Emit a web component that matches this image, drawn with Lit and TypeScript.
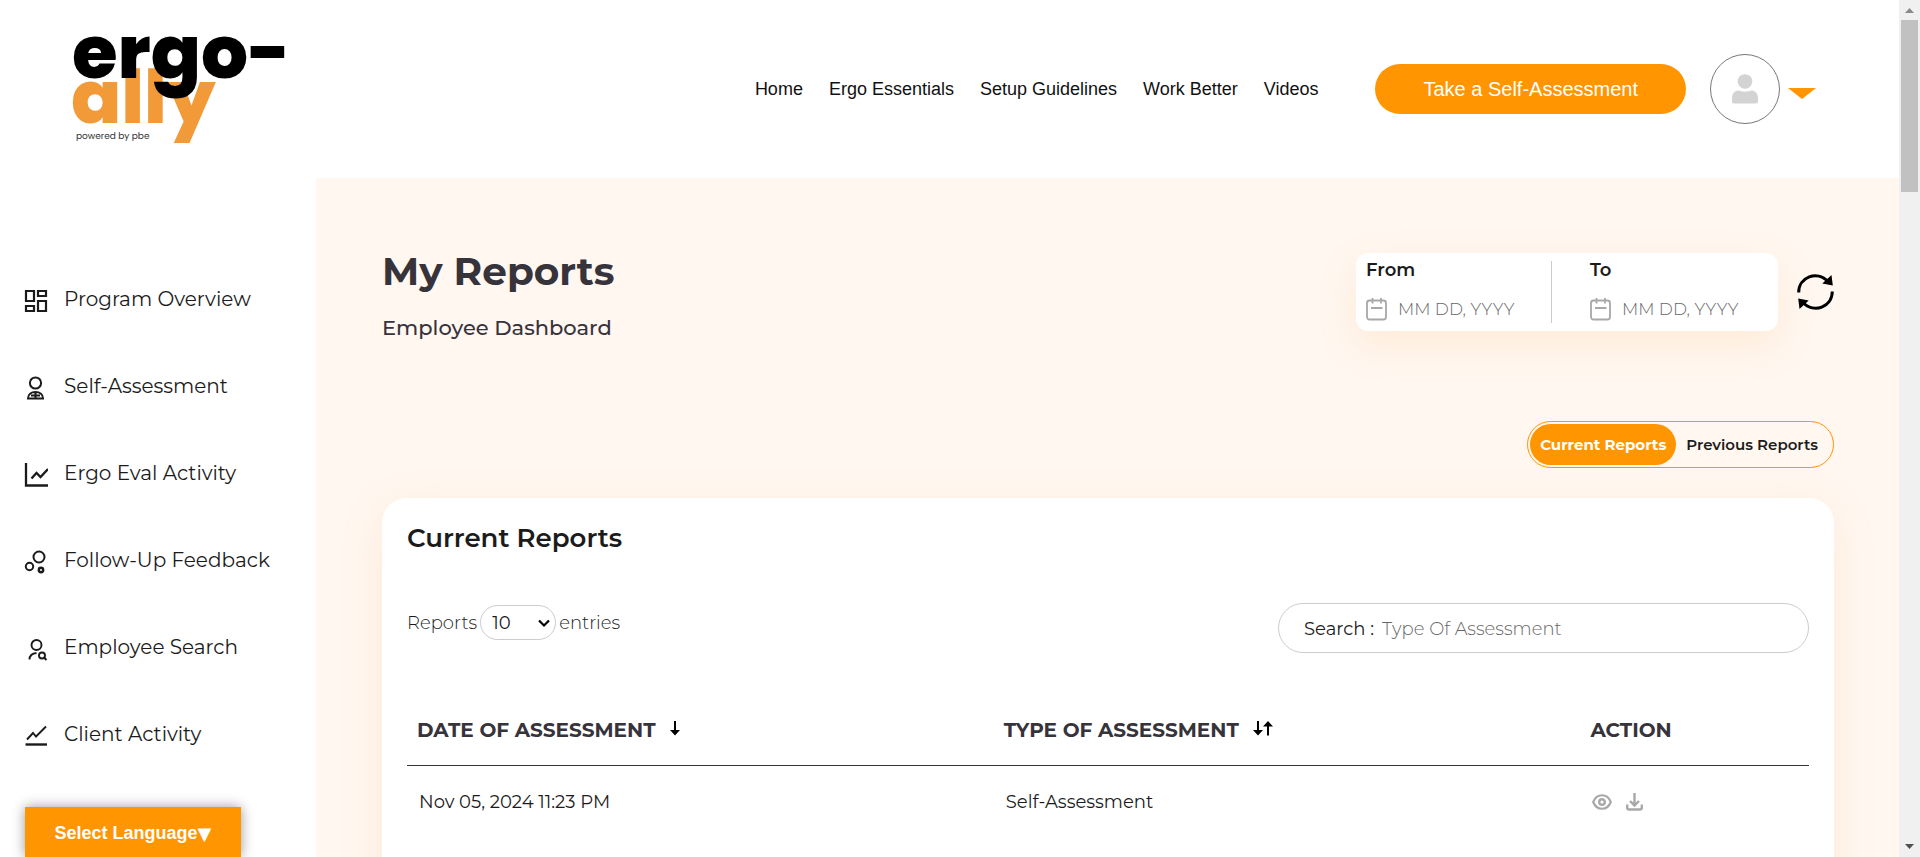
import { LitElement, html, css, svg } from "lit";
import { customElement, property, state } from "lit/decorators.js";
import { classMap } from "lit/directives/class-map.js";

const icons: Record<string, unknown> = {
  overview: svg`<path d="M2 2h8v10h-8zM14 2h8v5h-8zM2 17h8v5h-8zM14 12h8v10h-8z" fill="none" stroke="currentColor" stroke-width="2.2"/>`,
  assess: svg`<g fill="none" stroke="currentColor" stroke-width="2"><circle cx="11.500" cy="7" r="5.600"/><path d="M4 22.500c0-4 3-6.500 7.500-6.500s7.500 2.500 7.500 6.500zM11.500 16v6.500M7 19.500h9"/></g>`,
  chart: svg`<path d="M2 0v22.500h22M7.500 15.500l5-5.500 4 4 7.500-8" fill="none" stroke="currentColor" stroke-width="2.3"/>`,
  bubbles: svg`<g fill="none" stroke="currentColor"><circle cx="15" cy="7" r="5.500" stroke-width="2"/><circle cx="5.500" cy="16.500" r="3.700" stroke-width="2"/><circle cx="17" cy="20" r="2.200" stroke-width="2.400"/></g>`,
  search: svg`<g fill="none" stroke="currentColor" stroke-width="1.900"><circle cx="12.500" cy="8" r="5"/><path d="M5.500 22.500c0-3.500 2.500-6 7-6.500"/><circle cx="18" cy="18.500" r="3"/><path d="M20 20.500l2.500 2.500"/></g>`,
  trend: svg`<path d="M3 15.500l6-6.500 3 3.500 10-10" fill="none" stroke="currentColor" stroke-width="1.900"/><path d="M1.500 20.500h21.500" stroke="currentColor" stroke-width="2.400"/>`,
};

const base = css`
  * {
    box-sizing: border-box;
  }
  button,
  input,
  select {
    font: inherit;
    color: inherit;
    background: none;
    border: 0;
    padding: 0;
    margin: 0;
  }
  button {
    cursor: pointer;
  }
  a {
    color: inherit;
    text-decoration: none;
  }
  svg {
    display: block;
    flex: none;
  }
`;

@customElement("site-header")
class SiteHeader extends LitElement {
  static styles = [
    base,
    css`
      :host {
        display: flex;
        align-items: center;
        justify-content: space-between;
        height: 178px;
        padding: 0 83px 0 70px;
        background: #fff;
        font-family: "Liberation Sans", Arial, sans-serif;
      }
      .right {
        display: flex;
        align-items: center;
      }
      nav {
        display: flex;
        gap: 26px;
        font-size: 18px;
        line-height: 24px;
        margin-right: 57px;
        color: #111;
      }
      .cta {
        height: 50px;
        padding: 0 48px;
        border-radius: 25px;
        background: #ff9500;
        color: #fff;
        font-size: 20px;
      }
      .user {
        display: flex;
        align-items: center;
        gap: 8px;
        margin-left: 24px;
      }
      .avatar {
        display: grid;
        place-items: center;
        width: 70px;
        height: 70px;
        border: 1px solid #777;
        border-radius: 50%;
      }
      .caret {
        margin-top: 9px;
      }
      .logo {
        overflow: visible;
      }
      .big {
        font: 800 74px Poppins, Montserrat, Inter, sans-serif;
      }
      .small {
        font: 400 9px Poppins, Montserrat, Inter, sans-serif;
      }
    `,
  ];
  links = ["Home", "Ergo Essentials", "Setup Guidelines", "Work Better", "Videos"];
  render() {
    return html`
      <a href="#" aria-label="ergo-ally home">
        <svg class="logo" width="240" height="120" viewBox="0 0 240 120">
          <text class="big" x="1" y="94" fill="#f29a38">ally</text>
          <text class="big" x="2" y="49">ergo-</text>
          <text class="small" x="6" y="110" fill="#333">powered by pbe</text>
        </svg>
      </a>
      <div class="right">
        <nav>${this.links.map((l) => html`<a href="#">${l}</a>`)}</nav>
        <button class="cta">Take a Self-Assessment</button>
        <button class="user" aria-label="Account menu">
          <span class="avatar">
            <svg width="26" height="30" viewBox="0 0 26 30" fill="#d3d3d3">
              <circle cx="13" cy="7.500" r="7.300" />
              <path d="M0 24c0-5 3-7.500 7-7.500 2.500 1.500 9.500 1.500 12 0 4 0 7 2.500 7 7.500v3.500q0 2-2 2H2q-2 0-2-2z" />
            </svg>
          </span>
          <svg class="caret" width="28" height="11" viewBox="0 0 28 11"><path d="M0 0h28L14 11z" fill="#ff9500" /></svg>
        </button>
      </div>
    `;
  }
}

@customElement("side-menu")
class SideMenu extends LitElement {
  static styles = [
    base,
    css`
      :host {
        display: block;
        background: #fff;
        color: #1b1b1b;
      }
      nav {
        display: flex;
        flex-direction: column;
        gap: 59px;
        padding: 107px 0 0 24px;
      }
      .item {
        display: flex;
        align-items: center;
        gap: 16px;
        font-size: 20px;
        line-height: 28px;
      }
      .item svg {
        margin-top: 4px;
      }
    `,
  ];
  items = [
    ["overview", "Program Overview"],
    ["assess", "Self-Assessment"],
    ["chart", "Ergo Eval Activity"],
    ["bubbles", "Follow-Up Feedback"],
    ["search", "Employee Search"],
    ["trend", "Client Activity"],
  ];
  render() {
    return html`<nav>
      ${this.items.map(
        ([icon, label]) => html`<a class="item" href="#">
          <svg width="24" height="24" viewBox="0 0 24 24">${icons[icon]}</svg>${label}
        </a>`
      )}
    </nav>`;
  }
}

@customElement("date-range")
class DateRange extends LitElement {
  static styles = [
    base,
    css`
      :host {
        display: flex;
        align-items: center;
        gap: 19px;
      }
      .box {
        display: grid;
        grid-template-columns: 185px 1fr;
        height: 78px;
        width: 422px;
        padding: 8px 10px;
        border-radius: 12px;
        background: #fff;
        box-shadow: 0 14px 36px rgba(255, 190, 130, 0.22);
      }
      .field {
        display: flex;
        flex-direction: column;
        justify-content: space-between;
      }
      .field + .field {
        border-left: 1px solid #ccc;
        padding-left: 38px;
      }
      label {
        font-size: 18px;
        line-height: 18px;
        font-weight: 600;
        color: #1b1b1b;
      }
      .line {
        display: flex;
        align-items: center;
        gap: 11px;
        height: 28px;
      }
      input {
        width: 130px;
        font-size: 17px;
        font-weight: 300;
        outline: 0;
      }
      input::placeholder {
        color: #666;
        opacity: 1;
      }
    `,
  ];
  field(id: string, label: string) {
    return html`<div class="field">
      <label for=${id}>${label}</label>
      <div class="line">
        <svg width="21" height="24" viewBox="0 0 21 24" fill="none" stroke="#a8a8a8" stroke-width="1.800">
          <rect x="1" y="3.500" width="19" height="19" rx="2.500" />
          <path d="M6.500 1v5.500M15 1v5.500M5 11h11.500" />
        </svg>
        <input id=${id} type="text" placeholder="MM DD, YYYY" />
      </div>
    </div>`;
  }
  render() {
    return html`
      <div class="box">${this.field("from", "From")}${this.field("to", "To")}</div>
      <button aria-label="Refresh">
        <svg width="37" height="38" viewBox="0 0 37 38">
          <path d="M1.700 19.500C1.700 4 20-3 31 8.500M35.300 18.500C35.300 34 17 41 6 29.500" fill="none" stroke="#000" stroke-width="3" />
          <path d="M34.500 2l1.300 10.500-10.500-2zM2.500 36L1.200 25.500l10.500 2z" />
        </svg>
      </button>
    `;
  }
}

@customElement("report-card")
class ReportCard extends LitElement {
  static styles = [
    base,
    css`
      :host {
        display: block;
        flex: 1;
        min-height: 480px;
        padding: 24px 25px;
        background: #fff;
        border-radius: 25px;
        box-shadow: 0 12px 40px rgba(255, 190, 130, 0.22);
        color: #1b1b1b;
      }
      h2 {
        margin: 0 0 49px;
        font-size: 26px;
        line-height: 32px;
        font-weight: 600;
      }
      .tools {
        display: flex;
        justify-content: space-between;
        font-size: 18px;
        font-weight: 300;
        margin-bottom: 46px;
      }
      .entries {
        display: flex;
        align-items: center;
        gap: 3px;
        height: 39px;
      }
      .pick {
        position: relative;
        display: block;
      }
      select {
        display: block;
        appearance: none;
        width: 76px;
        height: 35px;
        padding-left: 11px;
        border: 1px solid #ccc;
        border-radius: 18px;
        font-weight: 400;
      }
      .chev {
        position: absolute;
        right: 6px;
        top: 14px;
        pointer-events: none;
      }
      .search {
        display: flex;
        align-items: center;
        gap: 8px;
        width: 531px;
        height: 50px;
        padding: 2px 25px 0;
        border: 1px solid #ccc;
        border-radius: 25px;
      }
      .search label {
        font-weight: 400;
      }
      .search input {
        flex: 1;
        outline: 0;
      }
      .search input::placeholder {
        color: #666;
        opacity: 1;
      }
      table {
        width: 100%;
        table-layout: fixed;
        border-collapse: separate;
        border-spacing: 0;
        text-align: left;
      }
      th {
        height: 67px;
        padding: 0 10px 4px;
        width: 41.85%;
        font-size: 20px;
        font-weight: 700;
        color: #37333b;
        border-bottom: 1px solid #37333b;
      }
      th:last-child {
        width: auto;
      }
      td {
        height: 71px;
        padding: 0 12px;
        font-size: 18px;
        color: #1b1b1b;
      }
      .head,
      .acts {
        display: flex;
        align-items: center;
        gap: 14px;
      }
      .head svg {
        margin-bottom: 4px;
      }
    `,
  ];
  @property() heading = "";
  rows = [["Nov 05, 2024 11:23 PM", "Self-Assessment"]];
  render() {
    return html`
      <h2>${this.heading}</h2>
      <div class="tools">
        <div class="entries">
          <label for="count">Reports</label>
          <span class="pick">
            <select id="count">
              <option>10</option>
              <option>25</option>
              <option>50</option>
            </select>
            <svg class="chev" width="12" height="9" viewBox="0 0 12 9"><path d="M1 1.500l5 5 5-5" fill="none" stroke="#000" stroke-width="2.200" /></svg>
          </span>
          <span>entries</span>
        </div>
        <div class="search">
          <label for="q">Search :</label>
          <input id="q" type="text" placeholder="Type Of Assessment" />
        </div>
      </div>
      <table>
        <thead>
          <tr>
            <th scope="col">
              <span class="head">DATE OF ASSESSMENT <svg width="10" height="15" viewBox="0 0 10 15"><path d="M4 0h2v9h4l-5 5.500L0 9h4z" /></svg></span>
            </th>
            <th scope="col">
              <span class="head"
                >TYPE OF ASSESSMENT
                <svg width="20" height="15" viewBox="0 0 20 15"><path d="M4 0h2v9h4l-5 5.500L0 9h4zM14 14.500h2v-9h4L15 0l-5 5.500h4z" /></svg
              ></span>
            </th>
            <th scope="col">ACTION</th>
          </tr>
        </thead>
        <tbody>
          ${this.rows.map(
            ([date, type]) => html`<tr>
              <td>${date}</td>
              <td>${type}</td>
              <td>
                <div class="acts">
                  <button aria-label="View report">
                    <svg width="20" height="16" viewBox="0 0 20 16" fill="none" stroke="#a8a8a8" stroke-width="2.200">
                      <path d="M1.200 8c3.500-9 14.100-9 17.600 0-3.500 9-14.100 9-17.600 0z" />
                      <circle cx="10" cy="8" r="2.800" stroke-width="2.400" />
                    </svg>
                  </button>
                  <button aria-label="Download report">
                    <svg width="17" height="18" viewBox="0 0 17 18" fill="none" stroke="#a8a8a8" stroke-width="2.400">
                      <path d="M8.500 0v12M4 8l4.500 4.500L13 8M1.200 11.500v3q0 2 2 2h10.600q2 0 2-2v-3" />
                    </svg>
                  </button>
                </div>
              </td>
            </tr>`
          )}
        </tbody>
      </table>
    `;
  }
}

@customElement("app-root")
class AppRoot extends LitElement {
  static styles = [
    base,
    css`
      :host {
        display: flex;
        height: 100vh;
        overflow: hidden;
        background: #fff;
        font-family: Montserrat, Inter, sans-serif;
      }
      .page {
        flex: 1;
        min-width: 0;
        display: grid;
        grid-template: auto 1fr / 316px 1fr;
      }
      site-header {
        grid-column: 1 / -1;
      }
      main {
        display: flex;
        flex-direction: column;
        min-width: 0;
        padding: 69px 65px 0 66px;
        background: #fff7f0;
      }
      .top {
        display: flex;
        justify-content: space-between;
        align-items: flex-start;
        color: #37333b;
      }
      date-range {
        margin-top: 6px;
      }
      h1 {
        margin: 0 0 19px;
        font-size: 39px;
        line-height: 48px;
        font-weight: 700;
      }
      .sub {
        margin: 0;
        font-size: 21px;
        line-height: 28px;
        font-weight: 500;
      }
      .toggle {
        align-self: flex-end;
        display: flex;
        margin: 79px 0 30px;
        padding: 2px 5px 2px 2px;
        border: 1px solid #ff9500;
        border-radius: 24px;
        font-size: 15px;
        font-weight: 600;
        color: #1b1b1b;
      }
      .tab {
        height: 41px;
        padding: 0 10px;
        border-radius: 21px;
      }
      .on {
        background: #ff9500;
        color: #fff;
        font-weight: 700;
      }
      .lang {
        position: absolute;
        left: 25px;
        bottom: 0;
        display: flex;
        align-items: center;
        justify-content: center;
        width: 216px;
        height: 50px;
        padding-top: 2px;
        background: #ff9500;
        color: #fff;
        font: bold 18px "Liberation Sans", Arial, sans-serif;
        box-shadow: 0 0 12px rgba(0, 0, 0, 0.4);
      }
      .tri {
        font-family: "DejaVu Sans", sans-serif;
      }
      .bar {
        width: 21px;
        display: flex;
        flex-direction: column;
        align-items: center;
        gap: 7px;
        padding: 8px 0;
        background: #f0f0f0;
      }
      .thumb {
        width: 17px;
        height: 172px;
        background: #c1c1c1;
      }
      .down {
        margin-top: auto;
      }
    `,
  ];
  @state() tab = "Current Reports";
  render() {
    return html`
      <div class="page">
        <site-header></site-header>
        <side-menu></side-menu>
        <main>
          <div class="top">
            <div>
              <h1>My Reports</h1>
              <p class="sub">Employee Dashboard</p>
            </div>
            <date-range></date-range>
          </div>
          <div class="toggle">
            ${["Current Reports", "Previous Reports"].map(
              (t) => html`<button class=${classMap({ tab: true, on: this.tab === t })} @click=${() => (this.tab = t)}>${t}</button>`
            )}
          </div>
          <report-card .heading=${this.tab}></report-card>
        </main>
      </div>
      <div class="bar" aria-hidden="true">
        <svg width="9" height="5" viewBox="0 0 9 5"><path d="M0 5h9L4.500 0z" fill="#8a8a8a" /></svg>
        <div class="thumb"></div>
        <svg class="down" width="9" height="5" viewBox="0 0 9 5"><path d="M0 0h9L4.500 5z" fill="#505050" /></svg>
      </div>
      <button class="lang">Select Language<span class="tri">▼</span></button>
    `;
  }
}
